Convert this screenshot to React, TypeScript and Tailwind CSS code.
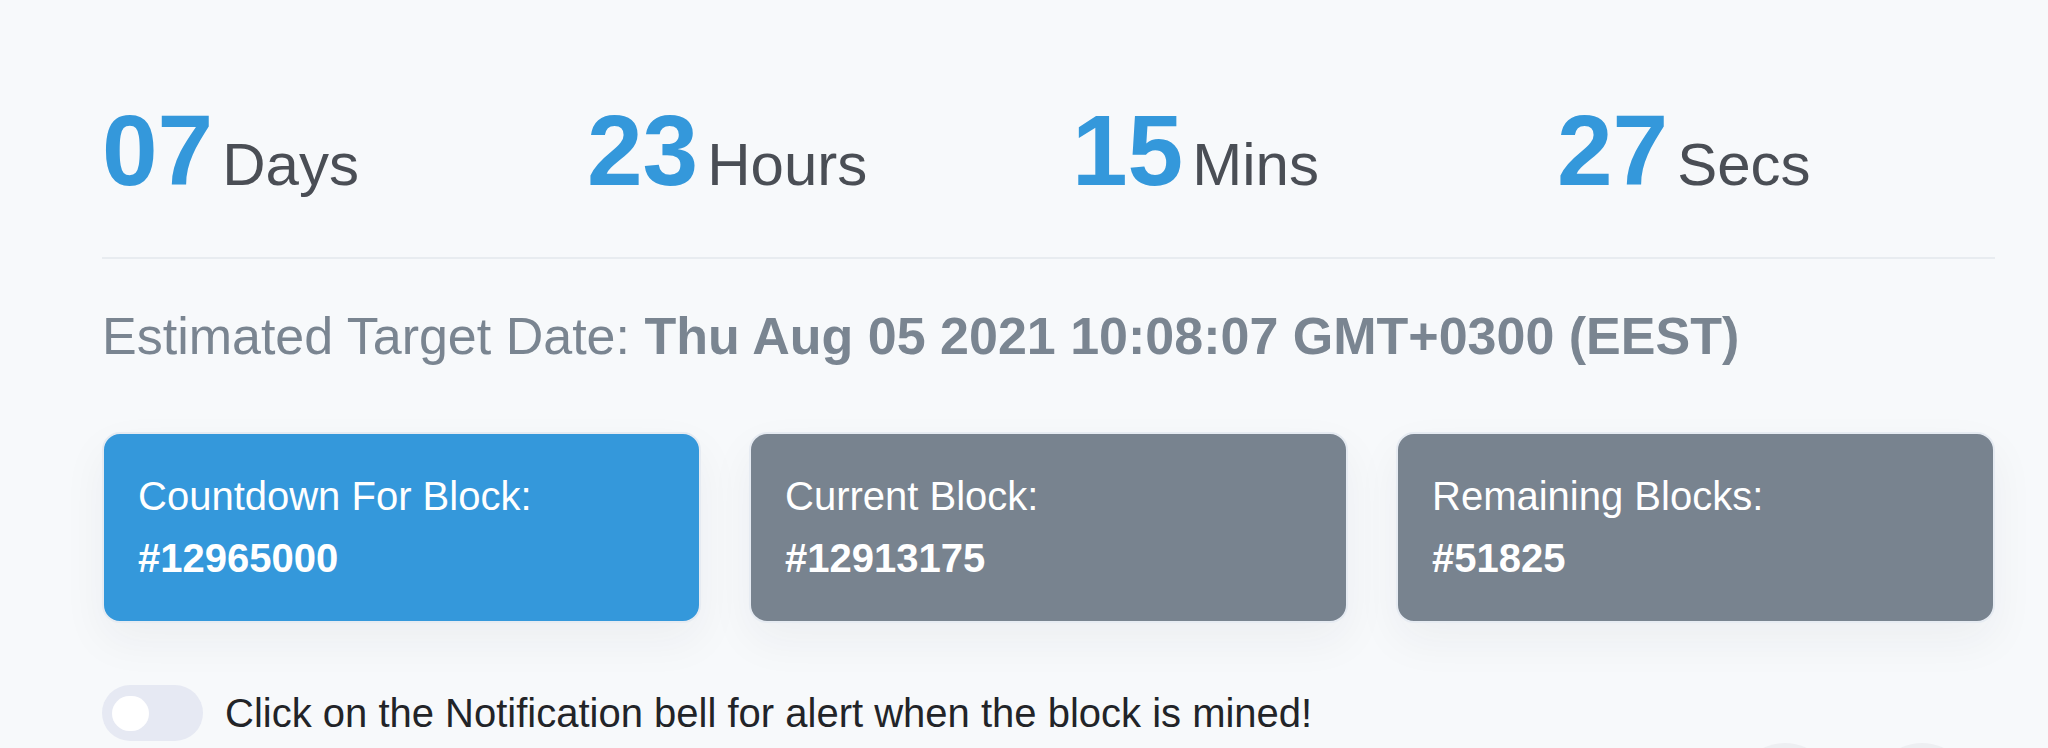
const units = [
  { value: "07", label: "Days" },
  { value: "23", label: "Hours" },
  { value: "15", label: "Mins" },
  { value: "27", label: "Secs" },
]

const blocks = [
  { title: "Countdown For Block:", value: "#12965000", active: true },
  { title: "Current Block:", value: "#12913175", active: false },
  { title: "Remaining Blocks:", value: "#51825", active: false },
]

export default function App() {
  return (
    <div className="min-h-[748px] overflow-hidden bg-[#f7f9fb] font-['Liberation_Sans',Arial,sans-serif]">
      <div className="ml-[102px] w-[1893px] pt-[100px]">
        <div className="grid grid-cols-4 gap-x-[47px]">
          {units.map((u) => (
            <div key={u.label} className="flex items-baseline">
              <span className="text-[100px] font-bold leading-none text-[#3498db]">{u.value}</span>
              <span className="ml-[9px] text-[60px] leading-none text-[#4a4e55]">{u.label}</span>
            </div>
          ))}
        </div>

        <div className="mt-[57px] h-[2px] bg-[#e8ecf0]" />

        <p className="mt-[46px] text-[52px] leading-[1.2] text-[#7a8591]">
          Estimated Target Date: <span className="font-bold">Thu Aug 05 2021 10:08:07 GMT+0300 (EEST)</span>
        </p>

        <div className="mt-[65px] grid grid-cols-3 gap-x-[48px]">
          {blocks.map((b) => (
            <div
              key={b.title}
              className={
                "rounded-[18px] border-2 border-[#e6ebf2] px-[34px] pt-[31px] pb-[32px] text-[40px] leading-[62px] text-white shadow-[0_18px_45px_rgba(30,40,60,0.05)] " +
                (b.active ? "bg-[#3498db]" : "bg-[#78838f]")
              }
            >
              <div>{b.title}</div>
              <div className="font-bold">{b.value}</div>
            </div>
          ))}
        </div>

        <div className="mt-[62px] flex items-center gap-[22px]">
          <button className="flex h-[56px] w-[101px] items-center rounded-full bg-[#e6e9f3] pl-[10px]">
            <span className="h-[35px] w-[37px] rounded-full bg-white" />
          </button>
          <span className="text-[40px] leading-[1.2] text-[#222428]">
            Click on the Notification bell for alert when the block is mined!
          </span>
        </div>

        <div className="mt-[2px] flex justify-end gap-[37px] pr-[23px]">
          <div className="h-[100px] w-[100px] rounded-full bg-[#edeff2]" />
          <div className="h-[100px] w-[100px] rounded-full bg-[#edeff2]" />
        </div>
      </div>
    </div>
  )
}
